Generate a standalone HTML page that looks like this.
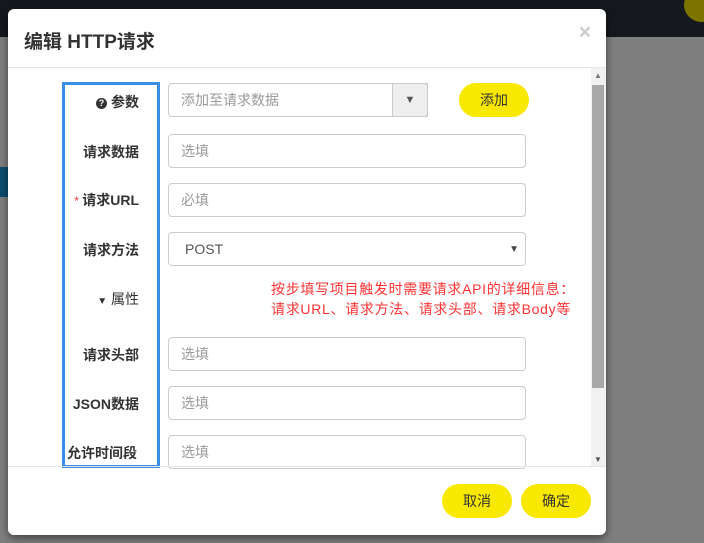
<!DOCTYPE html>
<html><head><meta charset="utf-8"><style>
*{box-sizing:border-box;margin:0;padding:0}
body{width:704px;height:543px;overflow:hidden;background:#7f7f7f;font-family:"Liberation Sans","Noto Sans CJK SC",sans-serif;position:relative}
.top{position:absolute;left:0;top:0;width:704px;height:37px;background:#15191d}
.circ{position:absolute;left:684px;top:-12px;width:36px;height:34px;border-radius:50%;background:#7d7400}
.tab{position:absolute;left:0;top:167px;width:8px;height:30px;background:#0d4c6e}
.modal{position:absolute;left:8px;top:9px;width:598px;height:526px;background:#fff;border-radius:6px;box-shadow:0 3px 9px rgba(0,0,0,.5);overflow:hidden}
.title{position:absolute;left:16px;top:18px;font-size:19px;font-weight:bold;color:#333}
.x{position:absolute;right:15px;top:12px;font-size:21px;font-weight:bold;color:#ccc}
.hb{position:absolute;left:0;top:58px;width:598px;height:1px;background:#e5e5e5}
.fb{position:absolute;left:0;top:457px;width:598px;height:1px;background:#e5e5e5}
.sb{position:absolute;left:583px;top:59px;width:15px;height:398px;background:#f1f1f1}
.thumb{position:absolute;left:584px;top:76px;width:12px;height:303px;background:#a8a8a8}
.blue{position:absolute;left:54px;top:73px;width:98px;height:386px;border:3px solid #3a8ee6}
.lab{position:absolute;font-size:14px;font-weight:bold;color:#333;text-align:right;width:110px}
.inp{position:absolute;left:160px;width:358px;height:34px;border:1px solid #ccc;border-radius:4px;font-size:14px;color:#999;padding:8px 12px;line-height:16px}
.btn{position:absolute;background:#f9e900;border-radius:17px;font-size:14px;color:#333;text-align:center;line-height:34px;height:34px;width:70px}
.red{position:absolute;left:263px;top:270px;color:#f33;font-size:14px;line-height:20px;letter-spacing:0.7px}
.q{display:inline-block;width:11px;height:11px;border-radius:50%;background:#333;color:#fff;font-size:9px;line-height:11px;text-align:center;vertical-align:1px;margin-right:4px}
</style></head><body>
<div class="top"></div><div class="circ"></div><div class="tab"></div>
<div class="modal">
<div class="title">编辑 HTTP请求</div><div class="x">×</div>
<div class="hb"></div>
<div class="blue"></div>
<div class="lab" style="left:21px;top:83px"><span class="q">?</span>参数</div>
<div class="inp" style="top:74px;width:260px;border-radius:4px 0 0 4px">添加至请求数据</div>
<div style="position:absolute;left:384px;top:74px;width:36px;height:34px;border:1px solid #ccc;background:#eee;border-radius:0 4px 4px 0;font-size:11px;color:#555;text-align:center;line-height:32px">▼</div>
<div class="btn" style="left:451px;top:74px">添加</div>
<div class="lab" style="left:21px;top:133px">请求数据</div>
<div class="inp" style="top:125px">选填</div>
<div class="lab" style="left:21px;top:181px"><span style="color:#e33;font-weight:normal;font-size:12px">* </span>请求URL</div>
<div class="inp" style="top:174px">必填</div>
<div class="lab" style="left:21px;top:231px">请求方法</div>
<div class="inp" style="top:223px;color:#555;padding-left:16px">POST<span style="position:absolute;right:6px;top:9px;font-size:10px;color:#444">▼</span></div>
<div class="lab" style="left:21px;top:280px;font-weight:normal"><span style="font-size:10px">▼</span> 属性</div>
<div class="red">按步填写项目触发时需要请求API的详细信息：<br>请求URL、请求方法、请求头部、请求Body等</div>
<div class="lab" style="left:21px;top:336px">请求头部</div>
<div class="inp" style="top:328px">选填</div>
<div class="lab" style="left:21px;top:385px">JSON数据</div>
<div class="inp" style="top:377px">选填</div>
<div class="lab" style="left:21px;top:434px;text-align:left;left:59px">允许时间段</div>
<div class="inp" style="top:426px">选填</div>
<div class="sb"></div><div class="thumb"></div>
<div style="position:absolute;left:586px;top:62px;font-size:8px;color:#777">▲</div>
<div style="position:absolute;left:586px;top:446px;font-size:8px;color:#555">▼</div>
<div class="fb"></div>
<div class="btn" style="left:434px;top:475px">取消</div>
<div class="btn" style="left:513px;top:475px">确定</div>
</div>
</body></html>
